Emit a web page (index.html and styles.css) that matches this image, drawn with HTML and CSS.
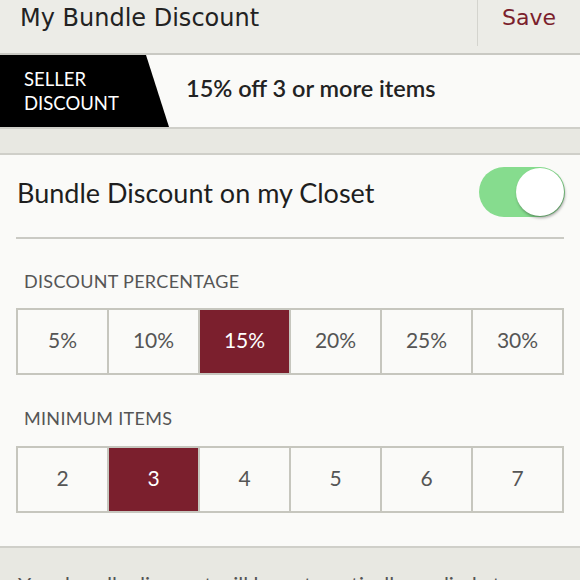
FILE: index.html
```html
<!DOCTYPE html>
<html>
<head>
    <title>My Bundle Discount</title>
    <link rel="stylesheet" href="styles.css">
</head>
<body>
    <div class="topbar">
        <div class="title">My Bundle Discount</div>
        <div class="save">Save</div>
    </div>

    <div class="banner">
        <div class="tag">SELLER<br>DISCOUNT</div>
        <div class="summary">15% off 3 or more items</div>
    </div>

    <div class="card">
        <div class="toggle-row">
            <span>Bundle Discount on my Closet</span>
            <div class="switch"><div class="knob"></div></div>
        </div>
        <div class="divider"></div>

        <div class="label first">DISCOUNT PERCENTAGE</div>
        <div class="choices">
            <div class="cell">5%</div>
            <div class="cell">10%</div>
            <div class="cell on">15%</div>
            <div class="cell">20%</div>
            <div class="cell">25%</div>
            <div class="cell">30%</div>
        </div>

        <div class="label">MINIMUM ITEMS</div>
        <div class="choices">
            <div class="cell">2</div>
            <div class="cell on">3</div>
            <div class="cell">4</div>
            <div class="cell">5</div>
            <div class="cell">6</div>
            <div class="cell">7</div>
        </div>
    </div>

    <p class="note">Your bundle discount will be automatically applied at checkout.</p>
</body>
</html>
```

FILE: styles.css
```css
body{
    margin: 0;
    background-color: #e8e8e2;
    font-family: Lato, "Open Sans", sans-serif;
    color: #1e1e1e;
    overflow: hidden;
}
.topbar{
    display: flex;
    height: 53px;
    background-color: #ecece7;
    border-bottom: 2px solid #c9c9c3;
}
.title{
    flex: 1;
    padding-left: 20px;
    font-family: "DejaVu Sans", sans-serif;
    font-size: 24px;
    line-height: 36px;
    color: #222;
}
.save{
    width: 102px;
    margin-bottom: 7px;
    border-left: 1px solid #d4d4ce;
    text-align: center;
    font-family: "DejaVu Sans", sans-serif;
    font-size: 22px;
    line-height: 36px;
    color: #7b1f2d;
}
.banner{
    display: flex;
    align-items: center;
    height: 72px;
    background-color: #fafaf8;
    border-bottom: 2px solid #cfcfc9;
}
.tag{
    align-self: stretch;
    width: 169px;
    padding-left: 24px;
    box-sizing: border-box;
    display: flex;
    align-items: center;
    background-color: #000;
    clip-path: polygon(0 0, 146px 0, 169px 100%, 0 100%);
    color: #fff;
    font-size: 18.5px;
    line-height: 24px;
}
.summary{
    padding-left: 17px;
    margin-bottom: 6px;
    font-size: 23.5px;
    font-weight: 600;
    color: #222;
}
.card{
    margin-top: 24px;
    padding: 12px 16px 33px;
    background-color: #fafaf8;
    border-top: 2px solid #cfcfc9;
    border-bottom: 2px solid #cfcfc9;
}
.toggle-row{
    display: flex;
    align-items: center;
    justify-content: space-between;
    padding-left: 1px;
    font-size: 27px;
    height: 50px;
}
.switch{
    position: relative;
    width: 86px;
    height: 50px;
    border-radius: 25px;
    background-color: #86dc8e;
    margin-right: -1px;
}
.knob{
    position: absolute;
    right: 1px;
    top: 1px;
    width: 48px;
    height: 48px;
    border-radius: 50%;
    background-color: #fff;
    box-shadow: 1px 2px 3px rgba(0, 0, 0, 0.35);
}
.divider{
    margin-top: 20px;
    height: 2px;
    background-color: #cacac4;
}
.label{
    margin: 33px 0 18px 8px;
    font-size: 18px;
    line-height: 20px;
    color: #555;
    letter-spacing: 0.3px;
}
.label.first{
    margin-top: 32px;
    margin-bottom: 17px;
}
.choices{
    display: grid;
    grid-template-columns: repeat(6, 1fr);
    gap: 2px;
    height: 63px;
    border: 2px solid #c6c6be;
    background-color: #c6c6be;
}
.cell{
    display: flex;
    align-items: center;
    justify-content: center;
    padding-bottom: 4px;
    background-color: #fafaf8;
    font-size: 21px;
    color: #555;
}
.cell.on{
    background-color: #7b1f2d;
    color: #fff;
}
.note{
    margin: 24px 0 0;
    padding: 0 18px;
    font-size: 21px;
    color: #555;
}
```
